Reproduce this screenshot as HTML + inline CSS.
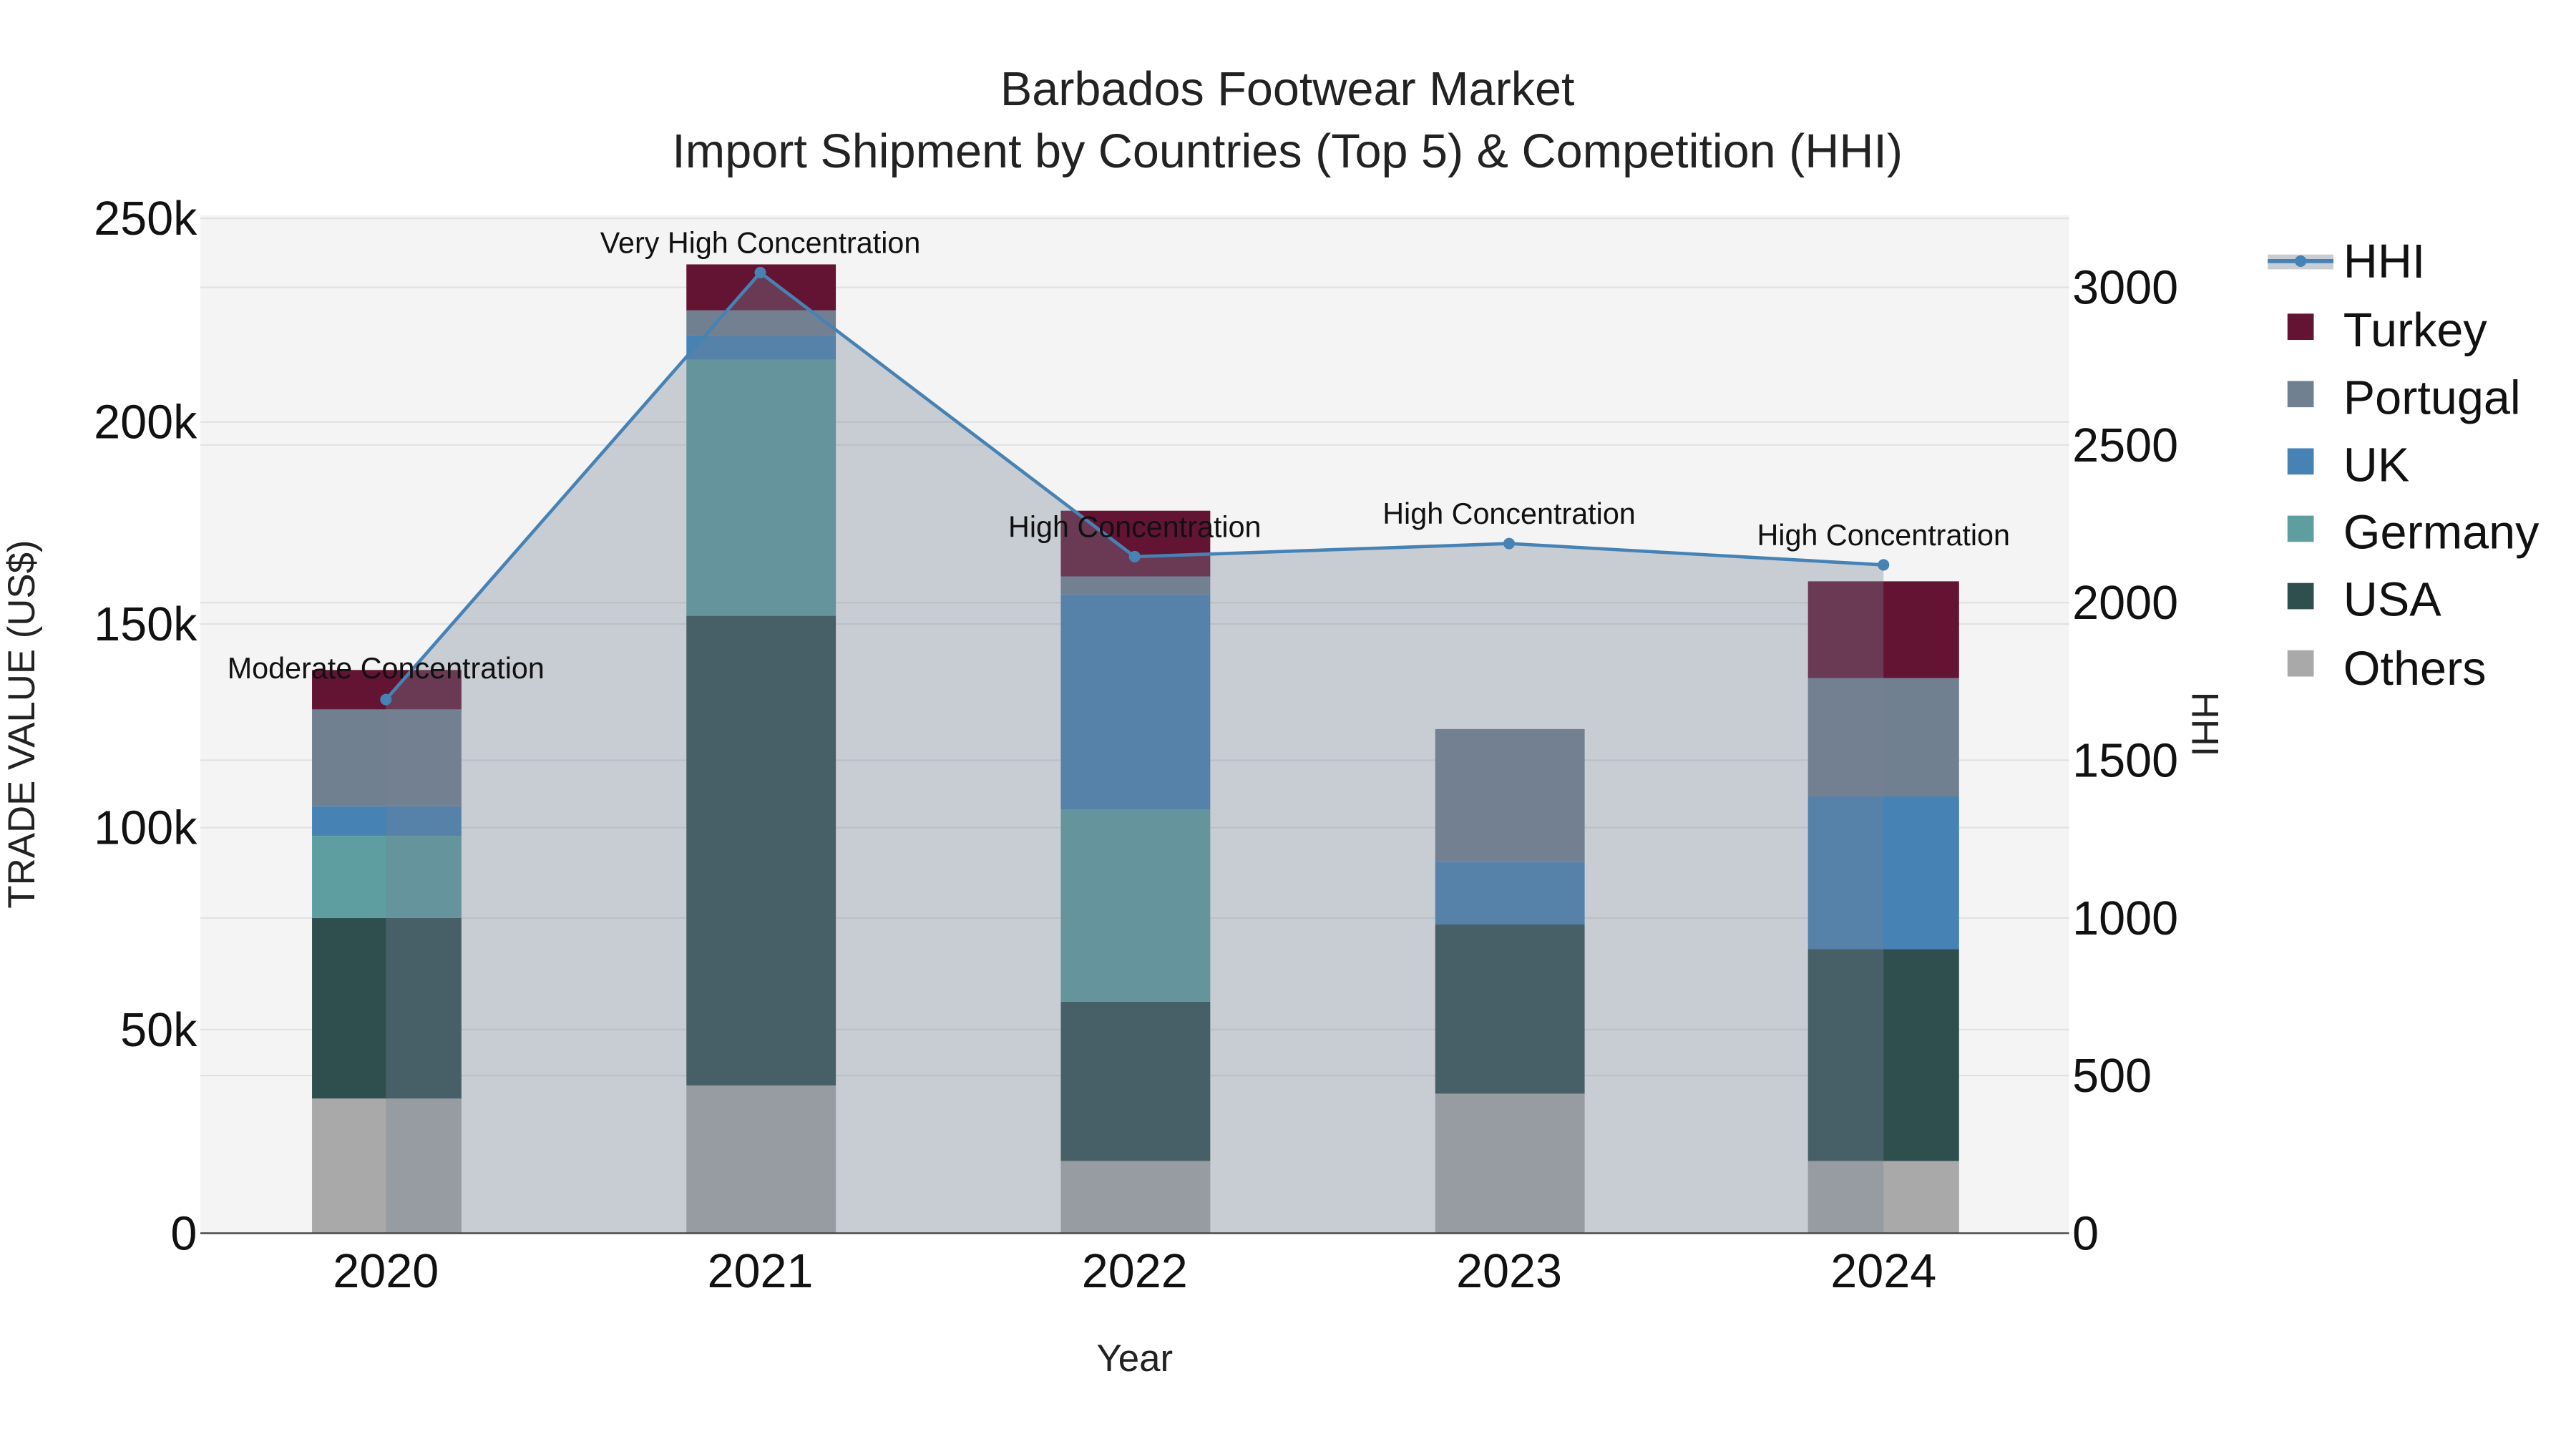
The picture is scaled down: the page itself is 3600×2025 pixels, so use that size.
<!DOCTYPE html>
<html><head><meta charset="utf-8"><style>html,body{margin:0;padding:0;background:#fff}svg{display:block}</style></head>
<body>
<svg width="3600" height="2025" viewBox="0 0 1568.7 882.4" xmlns="http://www.w3.org/2000/svg" font-family="Liberation Sans, sans-serif">
<rect width="1568.7" height="882.4" fill="#fff"/>
<rect x="122" y="131" width="1138" height="620" fill="#f4f4f4"/>
<g stroke="#e2e2e2" stroke-width="1">
<line x1="122" x2="1260" y1="133" y2="133"/><line x1="122" x2="1260" y1="257" y2="257"/><line x1="122" x2="1260" y1="380" y2="380"/><line x1="122" x2="1260" y1="504" y2="504"/><line x1="122" x2="1260" y1="627" y2="627"/>
<line x1="122" x2="1260" y1="175" y2="175"/><line x1="122" x2="1260" y1="271" y2="271"/><line x1="122" x2="1260" y1="367" y2="367"/><line x1="122" x2="1260" y1="463" y2="463"/><line x1="122" x2="1260" y1="559" y2="559"/><line x1="122" x2="1260" y1="655" y2="655"/>
</g>
<g>
<rect x="190" y="669" width="91" height="82" fill="#a9a9a9"/><rect x="190" y="559" width="91" height="110" fill="#2f4f4f"/><rect x="190" y="509" width="91" height="50" fill="#5f9ea0"/><rect x="190" y="491" width="91" height="18" fill="#4682b4"/><rect x="190" y="432" width="91" height="59" fill="#708090"/><rect x="190" y="408" width="91" height="24" fill="#641433"/>
<rect x="418" y="661" width="91" height="90" fill="#a9a9a9"/><rect x="418" y="375" width="91" height="286" fill="#2f4f4f"/><rect x="418" y="219" width="91" height="156" fill="#5f9ea0"/><rect x="418" y="204" width="91" height="15" fill="#4682b4"/><rect x="418" y="189" width="91" height="15" fill="#708090"/><rect x="418" y="161" width="91" height="28" fill="#641433"/>
<rect x="646" y="707" width="91" height="44" fill="#a9a9a9"/><rect x="646" y="610" width="91" height="97" fill="#2f4f4f"/><rect x="646" y="493" width="91" height="117" fill="#5f9ea0"/><rect x="646" y="362" width="91" height="131" fill="#4682b4"/><rect x="646" y="351" width="91" height="11" fill="#708090"/><rect x="646" y="311" width="91" height="40" fill="#641433"/>
<rect x="874" y="666" width="91" height="85" fill="#a9a9a9"/><rect x="874" y="563" width="91" height="103" fill="#2f4f4f"/><rect x="874" y="525" width="91" height="38" fill="#4682b4"/><rect x="874" y="444" width="91" height="81" fill="#708090"/>
<rect x="1101" y="707" width="92" height="44" fill="#a9a9a9"/><rect x="1101" y="578" width="92" height="129" fill="#2f4f4f"/><rect x="1101" y="485" width="92" height="93" fill="#4682b4"/><rect x="1101" y="413" width="92" height="72" fill="#708090"/><rect x="1101" y="354" width="92" height="59" fill="#641433"/>
</g>
<polygon points="235,751 235,426 463,166 691,339 919,331 1147,344 1147,751" fill="rgb(117,129,149)" fill-opacity="0.35"/>
<line x1="122" x2="1260" y1="751" y2="751" stroke="#444" stroke-width="1"/>
<polyline points="235,426 463,166 691,339 919,331 1147,344" fill="none" stroke="#4682b4" stroke-width="2"/>
<g fill="#4682b4"><circle cx="235" cy="426" r="3.5"/><circle cx="463" cy="166" r="3.5"/><circle cx="691" cy="339" r="3.5"/><circle cx="919" cy="331" r="3.5"/><circle cx="1147" cy="344" r="3.5"/></g>
<g font-size="18" fill="#111" text-anchor="middle">
<text x="235" y="413">Moderate Concentration</text><text x="463" y="154">Very High Concentration</text><text x="691" y="327">High Concentration</text><text x="919" y="319">High Concentration</text><text x="1147" y="332">High Concentration</text>
</g>
<g font-size="29" fill="#222" text-anchor="middle">
<text x="784" y="64">Barbados Footwear Market</text>
<text x="784" y="102">Import Shipment by Countries (Top 5) &amp; Competition (HHI)</text>
</g>
<g font-size="29" fill="#111" text-anchor="end">
<text x="120" y="143">250k</text><text x="120" y="267">200k</text><text x="120" y="390">150k</text><text x="120" y="514">100k</text><text x="120" y="637">50k</text><text x="120" y="761">0</text>
</g>
<g font-size="29" fill="#111" text-anchor="start">
<text x="1262" y="185">3000</text><text x="1262" y="281">2500</text><text x="1262" y="377">2000</text><text x="1262" y="473">1500</text><text x="1262" y="569">1000</text><text x="1262" y="665">500</text><text x="1262" y="761">0</text>
</g>
<g font-size="29" fill="#111" text-anchor="middle">
<text x="235" y="784">2020</text><text x="463" y="784">2021</text><text x="691" y="784">2022</text><text x="919" y="784">2023</text><text x="1147" y="784">2024</text>
</g>
<text x="691" y="835" font-size="23" fill="#222" text-anchor="middle">Year</text>
<text transform="translate(21,441) rotate(-90)" font-size="23" fill="#222" text-anchor="middle">TRADE VALUE (US$)</text>
<text transform="translate(1335,441) rotate(90)" font-size="23" fill="#222" text-anchor="middle">HHI</text>
<g font-size="29" fill="#111">
<rect x="1381" y="155" width="40" height="9" fill="#c8ccd3"/><line x1="1381" x2="1421" y1="159" y2="159" stroke="#4682b4" stroke-width="2.5"/><circle cx="1401" cy="159" r="3.5" fill="#4682b4"/>
<text x="1427" y="169">HHI</text>
<rect x="1393" y="191" width="16" height="16" fill="#641433"/><text x="1427" y="211">Turkey</text>
<rect x="1393" y="232" width="16" height="16" fill="#708090"/><text x="1427" y="252">Portugal</text>
<rect x="1393" y="273" width="16" height="16" fill="#4682b4"/><text x="1427" y="293">UK</text>
<rect x="1393" y="314" width="16" height="16" fill="#5f9ea0"/><text x="1427" y="334">Germany</text>
<rect x="1393" y="355" width="16" height="16" fill="#2f4f4f"/><text x="1427" y="375">USA</text>
<rect x="1393" y="396" width="16" height="16" fill="#a9a9a9"/><text x="1427" y="417">Others</text>
</g>
</svg>
</body></html>
